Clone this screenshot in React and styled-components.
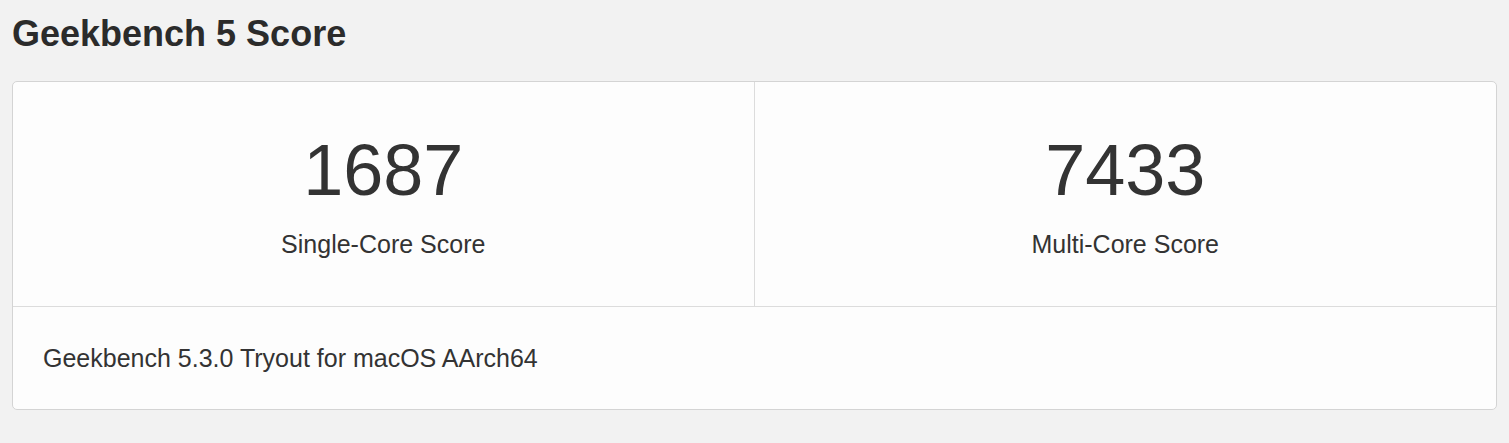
import React from 'react';
import styled, { createGlobalStyle } from 'styled-components';

const GlobalStyle = createGlobalStyle`
  html, body {
    margin: 0;
    background: #f2f2f2;
  }
  body {
    font-family: "Liberation Sans", Arial, sans-serif;
    color: #333;
  }
`;

const Page = styled.div`
  padding: 14px 12px 0;
`;

const Title = styled.h1`
  margin: 0 0 27px;
  font-size: 36px;
  line-height: 40px;
  font-weight: 700;
  color: #2b2b2b;
`;

const Card = styled.div`
  background: #fdfdfd;
  border: 1px solid #d4d4d4;
  border-radius: 5px;
  overflow: hidden;
`;

const ScoreRow = styled.div`
  display: grid;
  grid-template-columns: 1fr 1fr;
  border-bottom: 1px solid #dcdcdc;
`;

const ScoreCell = styled.div`
  display: flex;
  flex-direction: column;
  align-items: center;
  padding: 51px 0 47px;
  border-right: ${(p) => (p.$divider ? '1px solid #dcdcdc' : 'none')};
`;

const Score = styled.div`
  font-size: 72px;
  line-height: 74px;
  color: #333;
`;

const Label = styled.div`
  margin-top: 22px;
  font-size: 25px;
  line-height: 30px;
  color: #333;
`;

const Footer = styled.div`
  padding: 36px 30px 36px;
  font-size: 25px;
  line-height: 30px;
  color: #333;
`;

const scores = [
  { value: 1687, label: 'Single-Core Score' },
  { value: 7433, label: 'Multi-Core Score' },
];

export default function App() {
  return (
    <>
      <GlobalStyle />
      <Page>
        <Title>Geekbench 5 Score</Title>
        <Card>
          <ScoreRow>
            {scores.map((s, i) => (
              <ScoreCell key={s.label} $divider={i === 0}>
                <Score>{s.value}</Score>
                <Label>{s.label}</Label>
              </ScoreCell>
            ))}
          </ScoreRow>
          <Footer>Geekbench 5.3.0 Tryout for macOS AArch64</Footer>
        </Card>
      </Page>
    </>
  );
}
